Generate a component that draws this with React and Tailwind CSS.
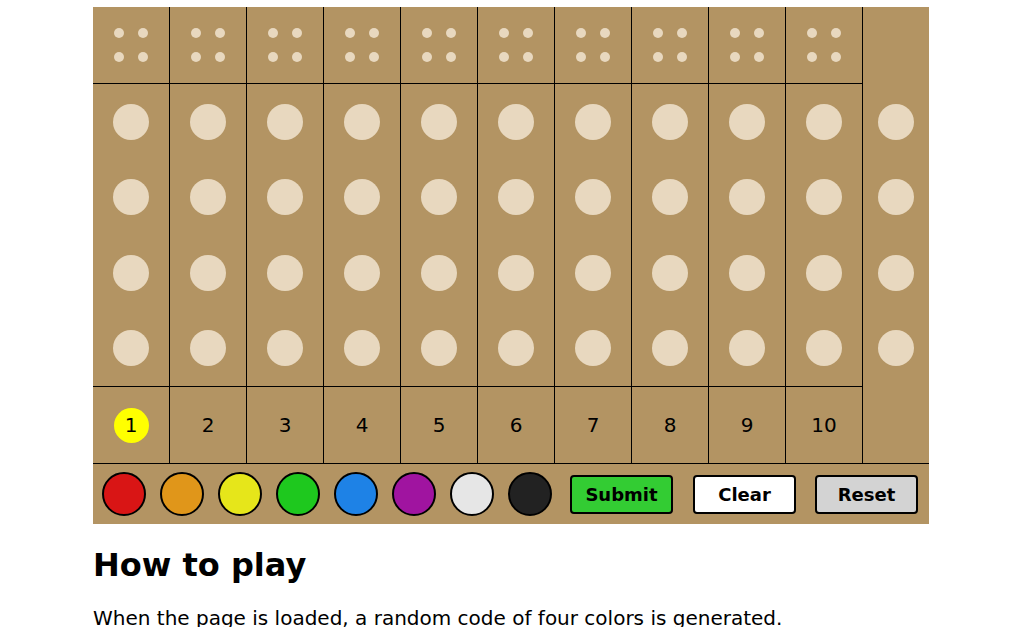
import React from 'react';

const palette = ['#d91515', '#e0961a', '#e6e61a', '#1ec81e', '#1e82e6', '#a014a0', '#e6e6e6', '#222222'];

const Peg = () => <div className="w-[36px] h-[36px] rounded-full bg-[#e8d8bf]" />;

const Column = ({ n }) => (
  <div className="w-[77px] flex flex-col border-r border-black">
    {/* feedback pins */}
    <div className="h-[77px] border-b border-black flex items-center justify-center">
      <div className="grid grid-cols-2 gap-[14px]">
        <div className="w-[10px] h-[10px] rounded-full bg-[#e8d8bf]" />
        <div className="w-[10px] h-[10px] rounded-full bg-[#e8d8bf]" />
        <div className="w-[10px] h-[10px] rounded-full bg-[#e8d8bf]" />
        <div className="w-[10px] h-[10px] rounded-full bg-[#e8d8bf]" />
      </div>
    </div>
    <div className="h-[302px] flex flex-col items-center justify-around">
      <Peg />
      <Peg />
      <Peg />
      <Peg />
    </div>
    <div className="h-[77px] border-t border-black flex items-center justify-center">
      {n === 1 ? (
        <div className="w-[35px] h-[35px] rounded-full bg-[#ffff00] flex items-center justify-center text-[20px] leading-none">
          {n}
        </div>
      ) : (
        <span className="text-[20px] leading-none">{n}</span>
      )}
    </div>
  </div>
);

export default function App() {
  return (
    <div className="pt-[7px] pl-[93px] text-black font-['DejaVu_Sans',sans-serif]">
      <div className="w-[836px] bg-[#b39463]">
        <div className="flex">
          {[1, 2, 3, 4, 5, 6, 7, 8, 9, 10].map(n => (
            <Column key={n} n={n} />
          ))}
          {/* secret code column */}
          <div className="w-[66px] pt-[77px]">
            <div className="h-[302px] flex flex-col items-center justify-around">
              <Peg />
              <Peg />
              <Peg />
              <Peg />
            </div>
          </div>
        </div>

        {/* color picker + controls */}
        <div className="h-[61px] border-t border-black flex items-center pl-[9px]">
          <div className="flex gap-[14px]">
            {palette.map(c => (
              <div
                key={c}
                className="w-[44px] h-[44px] rounded-full border-2 border-black"
                style={{ backgroundColor: c }}
              />
            ))}
          </div>
          <div className="flex ml-[18px]">
            <button className="w-[103px] h-[39px] rounded-[4px] border-2 border-black bg-[#33cc33] font-bold text-[18px]">
              Submit
            </button>
            <button className="ml-[20px] w-[103px] h-[39px] rounded-[4px] border-2 border-black bg-white font-bold text-[18px]">
              Clear
            </button>
            <button className="ml-[19px] w-[103px] h-[39px] rounded-[4px] border-2 border-black bg-[#d3d3d3] font-bold text-[18px]">
              Reset
            </button>
          </div>
        </div>
      </div>

      <h2 className="mt-[25px] text-[32px] font-bold leading-none">How to play</h2>
      <p className="mt-[22px] text-[20px] leading-[30px]">
        When the page is loaded, a random code of four colors is generated.
      </p>
    </div>
  );
}
